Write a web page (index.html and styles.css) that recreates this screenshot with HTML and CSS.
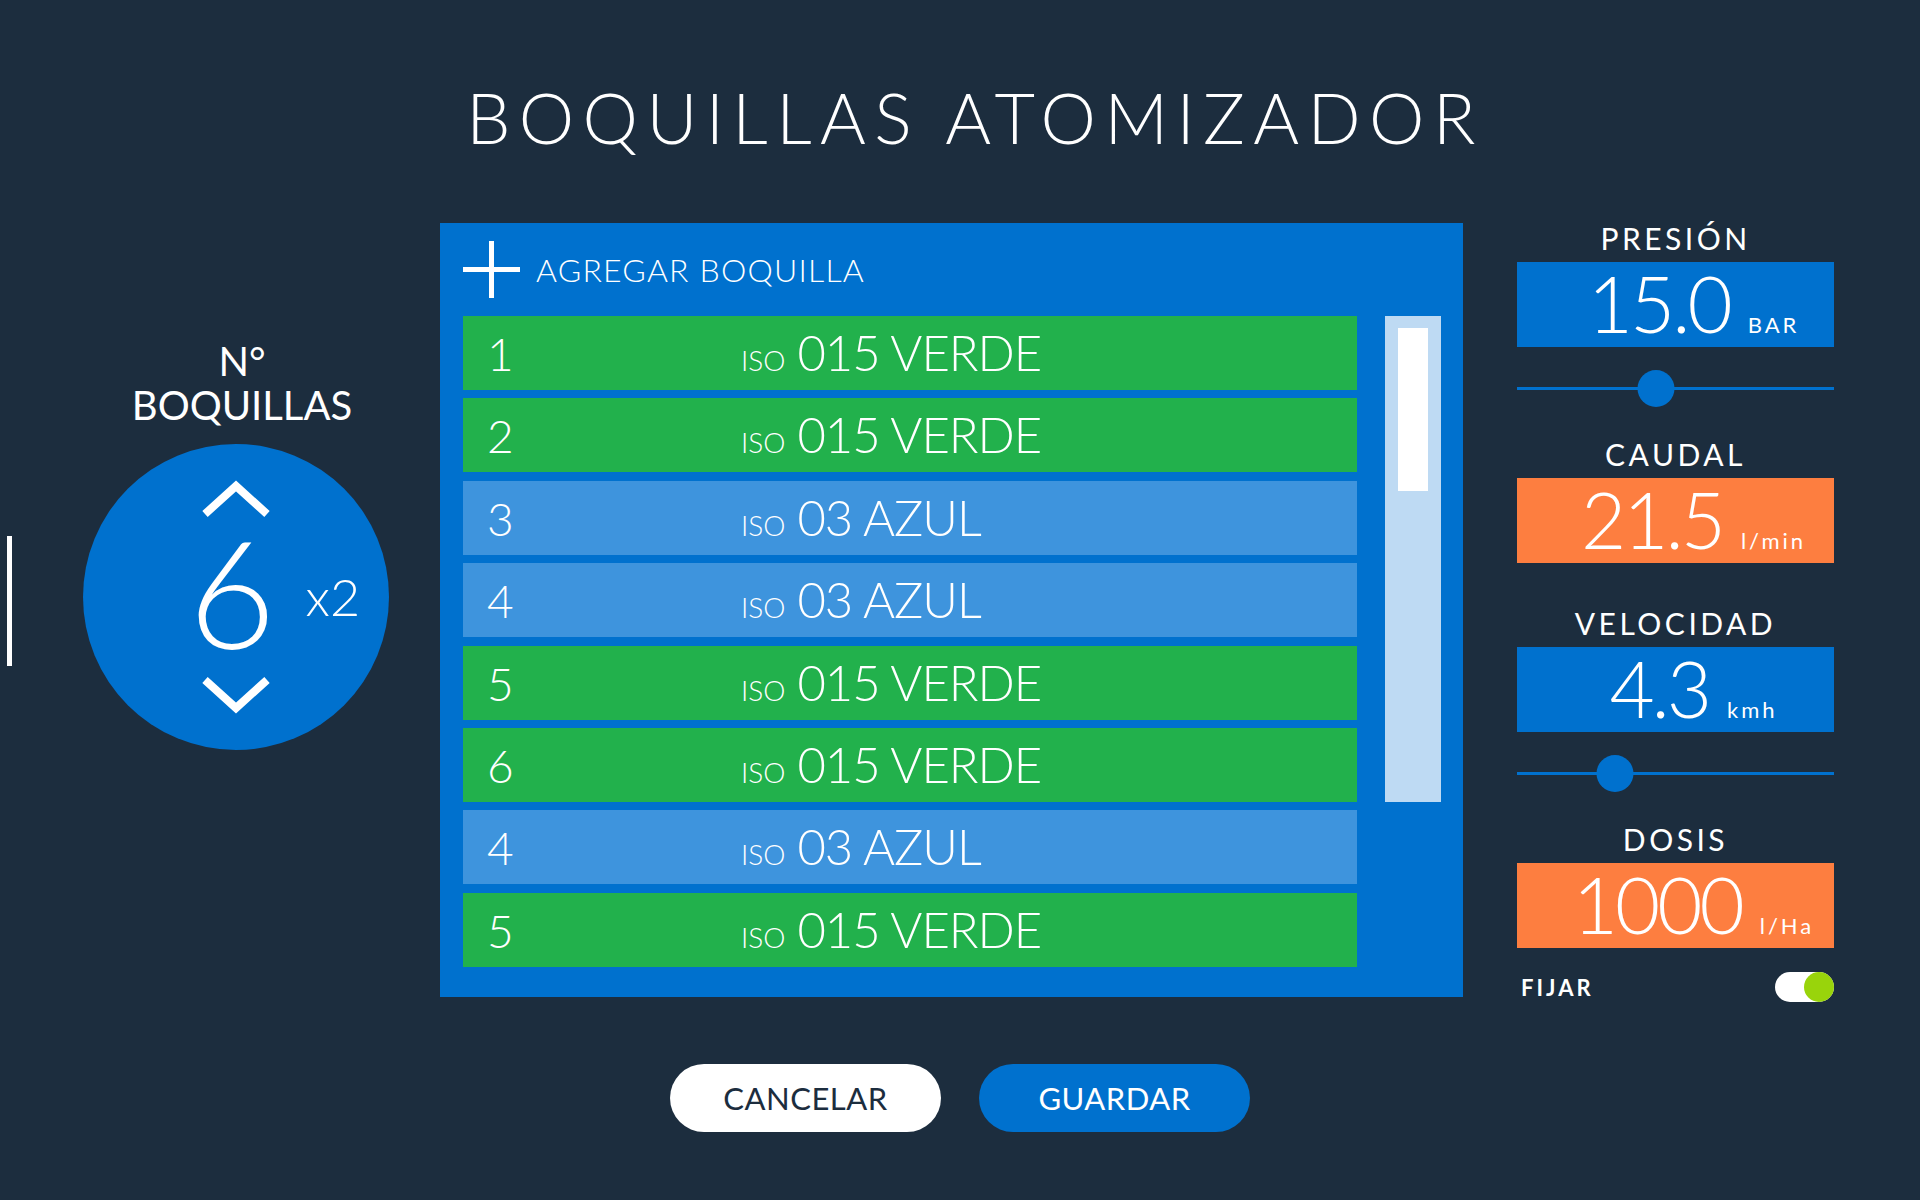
FILE: index.html
```html
<!DOCTYPE html>
<html lang="es">
<head>
  <meta charset="UTF-8">
  <title>Boquillas Atomizador</title>
  <meta name="viewport" content="width=device-width, initial-scale=1.0">
  <link rel="stylesheet" href="styles.css">
</head>
<body>
  <div class="screen">
    <h1 class="title">BOQUILLAS ATOMIZADOR</h1>

    <div class="main">
      <div class="side">
        <div class="side-title">N°<br>BOQUILLAS</div>
        <div class="dial-row">
          <div class="edge-bar"></div>
          <div class="dial">
            <svg class="chev" viewBox="0 0 72 38"><polyline points="5,34 36,6 67,34"/></svg>
            <div class="count">6<span class="mult">x2</span></div>
            <svg class="chev" viewBox="0 0 72 38"><polyline points="5,4 36,32 67,4"/></svg>
          </div>
        </div>
      </div>

      <div class="panel">
        <div class="panel-head">
          <svg class="plus" viewBox="0 0 57 57"><path d="M28.5 0V57M0 28.5H57"/></svg>
          <span>AGREGAR BOQUILLA</span>
        </div>
        <div class="panel-body">
          <div class="list" id="lista"></div>
          <div class="scroll"><div class="thumb"></div></div>
        </div>
      </div>

      <div class="metrics">
        <div class="metric">
          <div class="metric-label">PRESIÓN</div>
          <div class="metric-box blue"><span class="metric-value">15.0</span><span class="metric-unit">BAR</span></div>
        </div>
        <div class="slider"><div class="slider-track"></div><div class="slider-knob" style="left:44%"></div></div>
        <div class="metric">
          <div class="metric-label">CAUDAL</div>
          <div class="metric-box orange"><span class="metric-value">21.5</span><span class="metric-unit">l/min</span></div>
        </div>
        <div class="metric">
          <div class="metric-label">VELOCIDAD</div>
          <div class="metric-box blue"><span class="metric-value">4.3</span><span class="metric-unit">kmh</span></div>
        </div>
        <div class="slider"><div class="slider-track"></div><div class="slider-knob" style="left:31%"></div></div>
        <div class="metric">
          <div class="metric-label">DOSIS</div>
          <div class="metric-box orange"><span class="metric-value">1000</span><span class="metric-unit">l/Ha</span></div>
        </div>
        <div class="fijar">
          <span>FIJAR</span>
          <div class="toggle on"><div class="toggle-knob"></div></div>
        </div>
      </div>
    </div>

    <div class="actions">
      <button type="button" class="btn btn-light">CANCELAR</button>
      <button type="button" class="btn btn-blue">GUARDAR</button>
    </div>
  </div>

  <script>
    const boquillas = [
      { n: 1, tipo: "015 VERDE", color: "verde" },
      { n: 2, tipo: "015 VERDE", color: "verde" },
      { n: 3, tipo: "03 AZUL", color: "azul" },
      { n: 4, tipo: "03 AZUL", color: "azul" },
      { n: 5, tipo: "015 VERDE", color: "verde" },
      { n: 6, tipo: "015 VERDE", color: "verde" },
      { n: 4, tipo: "03 AZUL", color: "azul" },
      { n: 5, tipo: "015 VERDE", color: "verde" }
    ];

    function rowHtml(b) {
      return `
      <div class="row ${b.color}">
        <span class="row-num">${b.n}</span>
        <span class="row-iso">ISO</span>
        <span class="row-type">${b.tipo}</span>
      </div>`;
    }

    document.getElementById('lista').innerHTML = boquillas.map(rowHtml).join('');
  </script>
</body>
</html>
```

FILE: styles.css
```css
:root {
  --bg: #1c2d3e;
  --blue: #0071ce;
  --green: #22b14c;
  --sky: #3e94dd;
  --track: #bedaf3;
  --orange: #fd7e40;
  --lime: #99d40b;
  --white: #fff;
}
body {
  margin: 0;
  background: var(--bg);
  color: var(--white);
  font-family: 'Lato', 'Open Sans', sans-serif;
}
.screen {
  width: 1920px;
  height: 1200px;
  padding-top: 82px;
  box-sizing: border-box;
}
.title {
  margin: 0 0 71px 0;
  padding-left: 30px;
  text-align: center;
  font-size: 70px;
  line-height: 70px;
  font-weight: 300;
  letter-spacing: 8.4px;
}
.main {
  display: flex;
  align-items: flex-start;
  padding-left: 7px;
}

/* lado izquierdo */
.side {
  width: 382px;
  display: flex;
  flex-direction: column;
}
.side-title {
  margin: 116px 0 17px 76px;
  width: 306px;
  padding-left: 12px;
  box-sizing: border-box;
  text-align: center;
  font-size: 40px;
  line-height: 44px;
}
.dial-row {
  display: flex;
  align-items: center;
  gap: 71px;
}
.edge-bar {
  width: 5px;
  height: 130px;
  margin-top: 7px;
  background: var(--white);
}
.dial {
  width: 306px;
  height: 306px;
  border-radius: 50%;
  background: var(--blue);
  display: flex;
  flex-direction: column;
  align-items: center;
  justify-content: center;
}
.chev {
  width: 72px;
  height: 38px;
  fill: none;
  stroke: var(--white);
  stroke-width: 8;
  stroke-linejoin: miter;
}
.count {
  position: relative;
  margin: 18px 0 30px 0;
  font-size: 150px;
  line-height: 110px;
  font-weight: 300;
  padding-right: 8px;
}
.mult {
  position: absolute;
  left: calc(100% + 22px);
  bottom: 24px;
  font-size: 52px;
  line-height: 52px;
  font-weight: 300;
}

/* panel central */
.panel {
  margin-left: 51px;
  width: 1023px;
  height: 774px;
  box-sizing: border-box;
  background: var(--blue);
  padding: 18px 22px 0 23px;
}
.panel-head {
  display: flex;
  align-items: center;
  gap: 16px;
  height: 57px;
  margin-bottom: 18px;
  font-size: 32px;
  font-weight: 300;
  letter-spacing: 1.2px;
}
.plus {
  width: 57px;
  height: 57px;
  stroke: var(--white);
  stroke-width: 5;
}
.panel-body {
  display: flex;
  align-items: flex-start;
  gap: 28px;
}
.list {
  width: 894px;
  display: flex;
  flex-direction: column;
  gap: 8.4px;
}
.row {
  display: flex;
  align-items: baseline;
  height: 74px;
  line-height: 73px;
  padding-left: 24px;
}
.row.verde { background: var(--green); }
.row.azul { background: var(--sky); }
.row-num {
  width: 254px;
  font-size: 46px;
  font-weight: 300;
}
.row-iso {
  font-size: 28px;
  font-weight: 300;
  margin-right: 12px;
}
.row-type {
  font-size: 49px;
  font-weight: 300;
  letter-spacing: -1px;
}
.scroll {
  width: 56px;
  height: 486px;
  box-sizing: border-box;
  padding: 12px 13px;
  background: var(--track);
}
.thumb {
  height: 163px;
  background: var(--white);
}

/* columna derecha */
.metrics {
  margin-left: 54px;
  width: 317px;
}
.metric-label {
  text-align: center;
  font-size: 30px;
  line-height: 30px;
  letter-spacing: 3.5px;
  margin-bottom: 9px;
}
.metric-box {
  height: 85px;
  display: flex;
  justify-content: center;
  align-items: baseline;
  padding-left: 36px;
  box-sizing: border-box;
  line-height: 82px;
}
.metric-box.blue { background: var(--blue); }
.metric-box.orange { background: var(--orange); }
.metric-value {
  font-size: 78px;
  font-weight: 300;
  letter-spacing: -3px;
}
.metric-unit {
  margin-left: 18px;
  font-size: 22px;
  letter-spacing: 3px;
}
.slider {
  position: relative;
  height: 37px;
  margin-top: 23px;
  display: flex;
  align-items: center;
}
.slider-track {
  width: 100%;
  height: 3px;
  background: var(--blue);
}
.slider-knob {
  position: absolute;
  top: 0;
  width: 37px;
  height: 37px;
  border-radius: 50%;
  background: var(--blue);
  transform: translateX(-50%);
}
.slider + .metric { margin-top: 32px; }
.metric + .metric { margin-top: 45px; }
.fijar {
  display: flex;
  justify-content: space-between;
  align-items: center;
  margin-top: 24px;
  padding-left: 4px;
  font-size: 22px;
  font-weight: 700;
  letter-spacing: 3px;
}
.toggle {
  width: 59px;
  height: 30px;
  border-radius: 15px;
  background: var(--white);
  display: flex;
  justify-content: flex-end;
}
.toggle-knob {
  width: 30px;
  height: 30px;
  border-radius: 50%;
  background: var(--lime);
}

/* botones */
.actions {
  display: flex;
  justify-content: center;
  gap: 38px;
  margin-top: 62px;
}
.btn {
  width: 271px;
  height: 68px;
  border: none;
  border-radius: 34px;
  font-family: inherit;
  font-size: 31px;
  letter-spacing: 0.5px;
  cursor: pointer;
}
.btn-light {
  background: var(--white);
  color: var(--bg);
}
.btn-blue {
  background: var(--blue);
  color: var(--white);
}
```
